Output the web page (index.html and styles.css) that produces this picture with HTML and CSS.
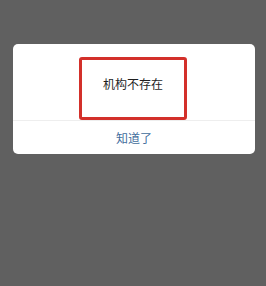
FILE: index.html
```html
<!DOCTYPE html>
<html lang="zh-CN">
<head>
    <meta charset="UTF-8">
    <meta name="viewport" content="width=device-width, initial-scale=1.0">
    <title>机构不存在</title>
    <link rel="stylesheet" href="styles.css">
</head>
<body>
    <div class="dialog">
        <div class="dialog-body">
            <!-- highlighted message -->
            <div class="mark">
                <p class="message">机构不存在</p>
            </div>
        </div>
        <div class="dialog-footer">
            <span class="ok">知道了</span>
        </div>
    </div>
</body>
</html>
```

FILE: styles.css
```css
html, body {
    height: 100%;
}

body {
    margin: 0;
    background-color: #606060;
    font-family: "Noto Sans CJK SC", "Noto Sans", sans-serif;
    padding-top: 44px;
    box-sizing: border-box;
}

.dialog {
    width: 242px;
    margin-left: 13px;
    background-color: #fff;
    border-radius: 5px;
    overflow: hidden;
}

.dialog-body {
    display: flex;
    justify-content: center;
    padding-top: 13px;
}

.mark {
    width: 108px;
    height: 63px;
    box-sizing: border-box;
    border: 3px solid #d3302a;
    border-radius: 3px;
    padding-top: 16px;
    margin-left: -2px;
}

.message {
    margin: 0;
    font-size: 12px;
    line-height: 16px;
    color: #1e1e1e;
    text-align: center;
}

.dialog-footer {
    border-top: 1px solid #eeeeee;
    height: 33px;
    display: flex;
    align-items: center;
    justify-content: center;
}

.ok {
    font-size: 12px;
    color: #3f6d9c;
}
```
